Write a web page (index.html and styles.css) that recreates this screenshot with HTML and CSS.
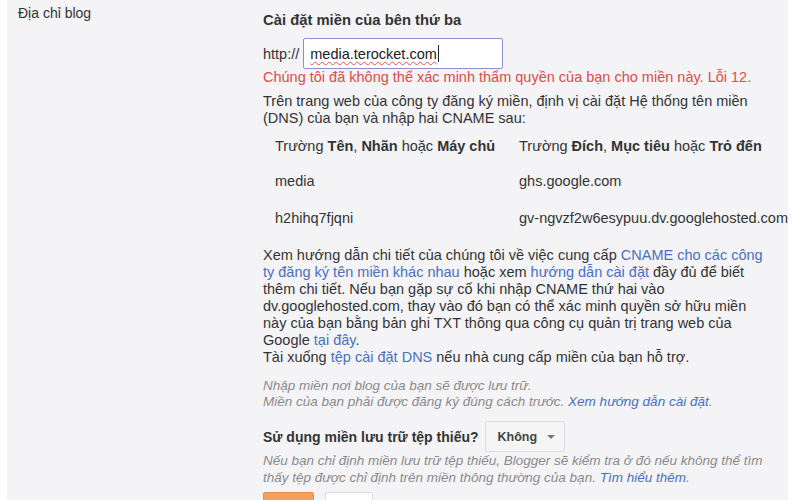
FILE: index.html
```html
<!DOCTYPE html>
<html lang="vi">
<head>
<meta charset="utf-8">
<title>Địa chỉ blog</title>
<link rel="stylesheet" href="styles.css">
</head>
<body>
<div class="panel">
  <div class="label">Địa chỉ blog</div>
  <div class="content">
    <div class="heading">Cài đặt miền của bên thứ ba</div>
    <div class="url-row">
      <span class="prefix">http://</span>
      <div class="input"><span class="typed">media.terocket.com</span><span class="caret"></span></div>
    </div>
    <div class="error">Chúng tôi đã không thể xác minh thẩm quyền của bạn cho miền này. Lỗi 12.</div>
    <div class="desc">Trên trang web của công ty đăng ký miền, định vị cài đặt Hệ thống tên miền (DNS) của bạn và nhập hai CNAME sau:</div>
    <table class="cname">
      <tr class="head">
        <td>Trường <b>Tên</b>, <b>Nhãn</b> hoặc <b>Máy chủ</b></td>
        <td>Trường <b>Đích</b>, <b>Mục tiêu</b> hoặc <b>Trỏ đến</b></td>
      </tr>
      <tr>
        <td>media</td>
        <td>ghs.google.com</td>
      </tr>
      <tr>
        <td>h2hihq7fjqni</td>
        <td>gv-ngvzf2w6esypuu.dv.googlehosted.com</td>
      </tr>
    </table>
    <div class="para">Xem hướng dẫn chi tiết của chúng tôi về việc cung cấp <a href="#">CNAME cho các công<br>ty đăng ký tên miền khác nhau</a> hoặc xem <a href="#">hướng dẫn cài đặt</a> đầy đủ để biết<br>thêm chi tiết. Nếu bạn gặp sự cố khi nhập CNAME thứ hai vào<br>dv.googlehosted.com, thay vào đó bạn có thể xác minh quyền sở hữu miền<br>này của bạn bằng bản ghi TXT thông qua công cụ quản trị trang web của<br>Google <a href="#">tại đây</a>.<br>Tài xuống <a href="#">tệp cài đặt DNS</a> nếu nhà cung cấp miền của bạn hỗ trợ.</div>
    <div class="hint">Nhập miền nơi blog của bạn sẽ được lưu trữ.<br>Miền của bạn phải được đăng ký đúng cách trước. <a href="#">Xem hướng dẫn cài đặt</a>.</div>
    <div class="fallback-row">
      <span class="fallback-label">Sử dụng miền lưu trữ tệp thiếu?</span>
      <div class="select">Không <span class="arrow"></span></div>
    </div>
    <div class="hint hint2">Nếu bạn chỉ định miền lưu trữ tệp thiếu, Blogger sẽ kiểm tra ở đó nếu không thể tìm thấy tệp được chỉ định trên miền thông thường của bạn. <a href="#">Tìm hiểu thêm</a>.</div>
    <div class="buttons">
      <span class="btn btn-save"></span>
      <span class="btn btn-cancel"></span>
    </div>
  </div>
</div>
</body>
</html>
```
FILE: styles.css
```css
html, body {
  margin: 0;
  padding: 0;
  background: #ffffff;
}
body {
  font-family: "Liberation Sans", Arial, sans-serif;
  font-size: 14.5px;
  color: #333333;
  height: 500px;
  overflow: hidden;
}
.panel {
  margin-left: 7px;
  width: 781px;
  height: 520px;
  background: #f4f4f6;
  display: flex;
}
.label {
  width: 245px;
  padding: 5px 0 0 11px;
  font-size: 14px;
  line-height: 17px;
  color: #333333;
  flex-shrink: 0;
}
.content {
  padding-top: 11px;
  width: 525px;
}
.heading {
  font-size: 14.8px;
  font-weight: bold;
  line-height: 18px;
  color: #333333;
}
.url-row {
  margin-top: 9px;
  display: flex;
  align-items: center;
  height: 31px;
}
.prefix {
  margin-right: 4px;
  color: #333333;
}
.input {
  width: 192px;
  height: 29px;
  border: 1px solid #8f8fcf;
  border-radius: 2px;
  background: #ffffff;
  padding-left: 6px;
  display: flex;
  align-items: center;
  font-size: 14.5px;
  color: #222222;
}
.typed {
  text-decoration: underline wavy #e05050;
  text-decoration-thickness: 1px;
  text-underline-offset: 2px;
}
.caret {
  display: inline-block;
  width: 1px;
  height: 17px;
  background: #222222;
  margin-left: 1px;
}
.error {
  line-height: 17px;
  color: #dd4b4b;
  white-space: nowrap;
}
.desc {
  margin-top: 7px;
  line-height: 17px;
  width: 495px;
}
.cname {
  margin-top: 3px;
  border-collapse: collapse;
  white-space: nowrap;
}
.cname td {
  padding: 0 0 0 12px;
  height: 37px;
  vertical-align: middle;
}
.cname td:first-child {
  width: 233px;
}
.cname .head td {
  height: 32px;
}
.cname b {
  color: #333333;
}
.para {
  margin-top: 11px;
  line-height: 17px;
  width: 525px;
}
a {
  color: #4a6fbe;
  text-decoration: none;
}
.hint {
  margin-top: 12px;
  font-size: 13.5px;
  font-style: italic;
  line-height: 16px;
  color: #8a8a8a;
  width: 505px;
}
.fallback-row {
  margin-top: 11px;
  display: flex;
  align-items: center;
  height: 31px;
}
.fallback-label {
  font-size: 14px;
  font-weight: bold;
  color: #333333;
  margin-right: 6px;
}
.select {
  height: 29px;
  padding: 0 9px 0 12px;
  border: 1px solid #dedede;
  border-radius: 2px;
  background: #f5f5f5;
  font-size: 12.5px;
  font-weight: bold;
  color: #444444;
  display: flex;
  align-items: center;
  gap: 10px;
}
.arrow {
  width: 0;
  height: 0;
  border-left: 4px solid transparent;
  border-right: 4px solid transparent;
  border-top: 4px solid #777777;
}
.hint2 {
  margin-top: 0;
  line-height: 17px;
}
.buttons {
  margin-top: 6px;
  display: flex;
  gap: 11px;
}
.btn {
  display: block;
  height: 28px;
  border-radius: 2px;
}
.btn-save {
  width: 49px;
  background: #f3a05c;
  border: 1px solid #e8904a;
}
.btn-cancel {
  width: 46px;
  background: #ffffff;
  border: 1px solid #dcdcdc;
}
```
